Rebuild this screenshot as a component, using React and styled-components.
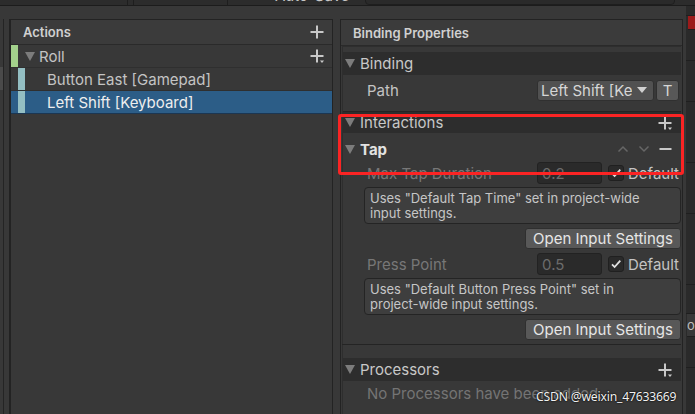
import styled, { createGlobalStyle } from 'styled-components';

const GlobalStyle = createGlobalStyle`
  html, body {
    margin: 0;
    padding: 0;
    background: #282828;
  }
  body {
    font-family: Inter, "Noto Sans", sans-serif;
  }
`;

const Window = styled.div`
  position: relative;
  width: 695px;
  height: 414px;
  overflow: hidden;
  background: #383838;
  display: flex;
  flex-direction: column;
  color: #c4c4c4;
  font-size: 15px;
`;

const Toolbar = styled.div`
  height: 5px;
  flex: none;
  display: flex;
  overflow: hidden;
  background: #2c2c2c;
  border-bottom: 1px solid #1c1c1c;
`;

const ToolSegment = styled.div`
  flex: none;
  width: ${(p) => p.$w}px;
  border-right: 1px solid #1e1e1e;
`;

const AutoSave = styled.div`
  flex: none;
  margin: -12px 0 0 47px;
  width: 90px;
  line-height: 16px;
  font-size: 15px;
  color: #c8c8c8;
`;

const ToolField = styled.div`
  flex: none;
  width: 308px;
  height: 4px;
  margin-top: -1px;
  border: 1px solid #1e1e1e;
  border-radius: 0 0 4px 4px;
  background: #2a2a2a;
`;

const Main = styled.div`
  flex: 1;
  display: flex;
  padding-top: 13px;
  min-height: 0;
`;

const LeftStub = styled.div`
  flex: none;
  width: 10px;
  display: flex;
  border-right: 1px solid #222;
  box-sizing: border-box;
`;

const StubEdge = styled.div`
  width: 3px;
  border-right: 1px solid #242424;
  padding-top: 48px;
  box-sizing: content-box;
`;

const StubBlock = styled.div`
  height: 23px;
  background: #4a4a4a;
`;

const Panel = styled.section`
  flex: none;
  width: ${(p) => p.$w}px;
  box-sizing: border-box;
  display: flex;
  flex-direction: column;
  border: 1px solid #232323;
  border-bottom: none;
  background: #383838;
`;

const Gap = styled.div`
  flex: none;
  width: 7px;
`;

const PanelHeader = styled.header`
  height: ${(p) => p.$h || 24}px;
  flex: none;
  display: flex;
  align-items: center;
  justify-content: space-between;
  padding: 0 8px 0 12px;
  background: #3b3b3b;
  border-bottom: 1px solid #2a2a2a;
  font-size: 13px;
  font-weight: 600;
  color: #d0d0d0;
`;

const TreeRow = styled.div`
  height: 22px;
  display: flex;
  align-items: center;
  background: ${(p) => (p.$selected ? '#2c5d87' : 'transparent')};
  color: ${(p) => (p.$selected ? '#eeeeee' : '#c4c4c4')};
  border-bottom: 1px solid ${(p) => (p.$selected ? '#1b3652' : '#2f2f2f')};
  padding-right: 8px;
`;

const ColorBar = styled.div`
  flex: none;
  align-self: stretch;
  width: 7px;
  margin-left: ${(p) => p.$indent}px;
  background: ${(p) => p.$color};
`;

const RowLabel = styled.span`
  margin-left: ${(p) => p.$indent}px;
  flex: 1;
  white-space: nowrap;
`;

const Tri = styled.span`
  flex: none;
  width: 0;
  height: 0;
  border-left: 5.5px solid transparent;
  border-right: 5.5px solid transparent;
  border-top: 9px solid #7c7c7c;
  margin-left: ${(p) => p.$indent || 0}px;
`;

const PropsBody = styled.div`
  flex: 1;
  display: flex;
  flex-direction: column;
  margin: 0 1px;
  padding-top: 5px;
  border-left: 1px solid #2e2e2e;
  border-top: 1px solid #2e2e2e;
`;

const FoldHeader = styled.div`
  height: ${(p) => p.$h || 23}px;
  flex: none;
  display: flex;
  align-items: center;
  padding: 0 9px 0 2px;
  background: #2d2d2d;
  color: #c8c8c8;
`;

const FoldTitle = styled.span`
  flex: 1;
  margin-left: 5px;
`;

const SubHeader = styled.div`
  height: 22px;
  margin-top: 5px;
  display: flex;
  align-items: center;
  padding: 0 9px 0 2px;
  color: #e2e2e2;
  font-weight: 700;
`;

const HeaderTools = styled.div`
  display: flex;
  align-items: center;
  gap: 9px;
`;

const FieldRow = styled.div`
  height: 22px;
  margin-top: ${(p) => p.$mt || 0}px;
  display: flex;
  align-items: center;
  padding-left: 24px;
  padding-right: 2px;
  white-space: nowrap;
  overflow: hidden;
`;

const FieldLabel = styled.span`
  flex: 1;
  color: ${(p) => (p.$disabled ? '#777777' : '#c4c4c4')};
`;

const Dropdown = styled.div`
  flex: none;
  width: 117px;
  height: 21px;
  box-sizing: border-box;
  display: flex;
  align-items: center;
  justify-content: space-between;
  padding: 0 6px 0 3px;
  border-radius: 3px;
  background: #515151;
  border: 1px solid #303030;
  color: #d6d6d6;
  overflow: hidden;
`;

const DropText = styled.span`
  overflow: hidden;
  white-space: nowrap;
`;

const DropArrow = styled.span`
  flex: none;
  width: 0;
  height: 0;
  border-left: 5px solid transparent;
  border-right: 5px solid transparent;
  border-top: 6px solid #d0d0d0;
  margin-left: 2px;
`;

const SmallButton = styled.div`
  flex: none;
  width: 23px;
  height: 21px;
  box-sizing: border-box;
  margin-left: 2px;
  display: flex;
  align-items: center;
  justify-content: center;
  border-radius: 3px;
  background: #585858;
  border: 1px solid #303030;
  color: #d6d6d6;
`;

const NumberField = styled.div`
  flex: none;
  width: 65px;
  height: 22px;
  box-sizing: border-box;
  display: flex;
  align-items: center;
  padding-left: 4px;
  border-radius: 3px;
  background: #2a2a2a;
  border: 1px solid #222;
  color: #6c6c6c;
`;

const CheckBox = styled.div`
  flex: none;
  width: 16px;
  height: 16px;
  box-sizing: border-box;
  margin-left: 6px;
  display: flex;
  align-items: center;
  justify-content: center;
  border-radius: 3px;
  background: #2a2a2a;
  border: 1px solid #202020;
`;

const CheckLabel = styled.span`
  flex: none;
  margin-left: 4px;
  color: #c4c4c4;
`;

const HelpBox = styled.div`
  margin: 3px 0 0 21px;
  height: 37px;
  box-sizing: border-box;
  padding: 3px 5px 2px;
  border-radius: 4px;
  background: #3e3e3e;
  border: 1px solid #242424;
  font-size: 13px;
  line-height: 15px;
  color: #c6c6c6;
  white-space: nowrap;
`;

const ButtonRow = styled.div`
  margin-top: 4px;
  display: flex;
  justify-content: flex-end;
`;

const Button = styled.div`
  width: 156px;
  height: 21px;
  box-sizing: border-box;
  display: flex;
  align-items: center;
  justify-content: center;
  border-radius: 3px;
  background: #585858;
  border: 1px solid #2f2f2f;
  color: #e6e6e6;
  white-space: nowrap;
`;

const Separator = styled.div`
  height: 1px;
  margin: ${(p) => p.$m};
  background: #242424;
`;

const EmptyNote = styled.div`
  height: 24px;
  display: flex;
  align-items: center;
  padding-left: 24px;
  color: #747474;
  white-space: nowrap;
`;

const RightStub = styled.div`
  flex: 1;
  margin-top: -13px;
  display: flex;
  flex-direction: column;
  border-left: 3px solid #383838;
  background: #2a2a2a;
`;

const StubLine = styled.div`
  flex: none;
  height: ${(p) => p.$h}px;
  background: ${(p) => p.$bg || 'transparent'};
  border-bottom: 1px solid #1f1f1f;
  margin-left: ${(p) => p.$ml || 0}px;
  font-size: 13px;
  color: #bdbdbd;
  overflow: hidden;
  line-height: ${(p) => p.$h}px;
`;

const Highlight = styled.div`
  position: absolute;
  left: 338px;
  top: 114px;
  width: 346px;
  height: 61px;
  box-sizing: border-box;
  border: 3px solid #fb2424;
  border-radius: 3px;
  pointer-events: none;
`;

const Watermark = styled.div`
  position: absolute;
  left: 536px;
  top: 388px;
  font-family: "Noto Sans", "Liberation Sans", sans-serif;
  font-size: 12.2px;
  letter-spacing: -0.2px;
  color: #f2f2f2;
  text-shadow: 0 0 2px #000, 0 0 1px #000;
  white-space: nowrap;
`;

function Plus({ drop }) {
  return (
    <svg width="14" height="14" viewBox="0 0 14 14">
      <path d="M6 0.5h2v5.5h5.5v2H8v5.5H6V8H0.5V6H6z" fill="#c8c8c8" />
      {drop && <path d="M10 11.5h4l-2 2.5z" fill="#c8c8c8" />}
    </svg>
  );
}

function Chevron({ up }) {
  return (
    <svg width="12" height="8" viewBox="0 0 12 8">
      <path
        d={up ? 'M1.5 6.5L6 2l4.5 4.5' : 'M1.5 1.5L6 6l4.5-4.5'}
        fill="none"
        stroke="#666666"
        strokeWidth="1.5"
      />
    </svg>
  );
}

function Minus() {
  return (
    <svg width="13" height="14" viewBox="0 0 13 14">
      <rect x="0.5" y="6" width="12" height="2" fill="#c8c8c8" />
    </svg>
  );
}

function Check() {
  return (
    <svg width="12" height="12" viewBox="0 0 12 12">
      <path d="M2 6.3l2.6 2.7L10.3 2.6" fill="none" stroke="#e0e0e0" strokeWidth="1.8" />
    </svg>
  );
}

function SettingField({ label, value, mt }) {
  return (
    <FieldRow $mt={mt}>
      <FieldLabel $disabled>{label}</FieldLabel>
      <NumberField>{value}</NumberField>
      <CheckBox>
        <Check />
      </CheckBox>
      <CheckLabel>Default</CheckLabel>
    </FieldRow>
  );
}

export default function App() {
  return (
    <Window>
      <GlobalStyle />
      <Toolbar>
        <ToolSegment $w={127} />
        <ToolSegment $w={5} />
        <ToolSegment $w={93} />
        <AutoSave>Auto-Save</AutoSave>
        <ToolField />
      </Toolbar>
      <Main>
        <LeftStub>
          <StubEdge>
            <StubBlock />
          </StubEdge>
        </LeftStub>
        <Panel $w={323}>
          <PanelHeader>
            Actions
            <Plus />
          </PanelHeader>
          <TreeRow>
            <ColorBar $indent={0} $color="#a3d18c" />
            <Tri $indent={7} />
            <RowLabel $indent={4}>Roll</RowLabel>
            <Plus drop />
          </TreeRow>
          <TreeRow>
            <ColorBar $indent={7} $color="#94bfc3" />
            <RowLabel $indent={22}>Button East [Gamepad]</RowLabel>
          </TreeRow>
          <TreeRow $selected>
            <ColorBar $indent={7} $color="#94bfc3" />
            <RowLabel $indent={22}>Left Shift [Keyboard]</RowLabel>
          </TreeRow>
        </Panel>
        <Gap />
        <Panel $w={343}>
          <PanelHeader $h={25}>Binding Properties</PanelHeader>
          <PropsBody>
            <FoldHeader>
              <Tri />
              <FoldTitle>Binding</FoldTitle>
            </FoldHeader>
            <FieldRow $mt={4}>
              <FieldLabel>Path</FieldLabel>
              <Dropdown>
                <DropText>Left Shift [Ke</DropText>
                <DropArrow />
              </Dropdown>
              <SmallButton>T</SmallButton>
            </FieldRow>
            <Separator $m="10px 0 0 0" />
            <FoldHeader $h={21}>
              <Tri />
              <FoldTitle>Interactions</FoldTitle>
              <Plus drop />
            </FoldHeader>
            <SubHeader>
              <Tri />
              <FoldTitle>Tap</FoldTitle>
              <HeaderTools>
                <Chevron up />
                <Chevron />
                <Minus />
              </HeaderTools>
            </SubHeader>
            <SettingField label="Max Tap Duration" value="0.2" mt={2} />
            <HelpBox>
              Uses "Default Tap Time" set in project-wide
              <br />
              input settings.
            </HelpBox>
            <ButtonRow>
              <Button>Open Input Settings</Button>
            </ButtonRow>
            <SettingField label="Press Point" value="0.5" mt={4} />
            <HelpBox>
              Uses "Default Button Press Point" set in
              <br />
              project-wide input settings.
            </HelpBox>
            <ButtonRow>
              <Button>Open Input Settings</Button>
            </ButtonRow>
            <Separator $m="4px 0 13px -1px" />
            <FoldHeader>
              <Tri />
              <FoldTitle>Processors</FoldTitle>
              <Plus drop />
            </FoldHeader>
            <EmptyNote>No Processors have been added.</EmptyNote>
          </PropsBody>
        </Panel>
        <RightStub>
          <StubLine $h={9} />
          <StubLine $h={13} $bg="#9c1a1a" $ml={2} />
          <StubLine $h={30} />
          <StubLine $h={40} />
          <StubLine $h={60} />
          <StubLine $h={50} />
          <StubLine $h={70} />
          <StubLine $h={28} />
          <StubLine $h={22} $bg="#383838" $ml={1}>or</StubLine>
          <StubLine $h={30} />
        </RightStub>
      </Main>
      <Highlight />
      <Watermark>CSDN @weixin_47633669</Watermark>
    </Window>
  );
}
